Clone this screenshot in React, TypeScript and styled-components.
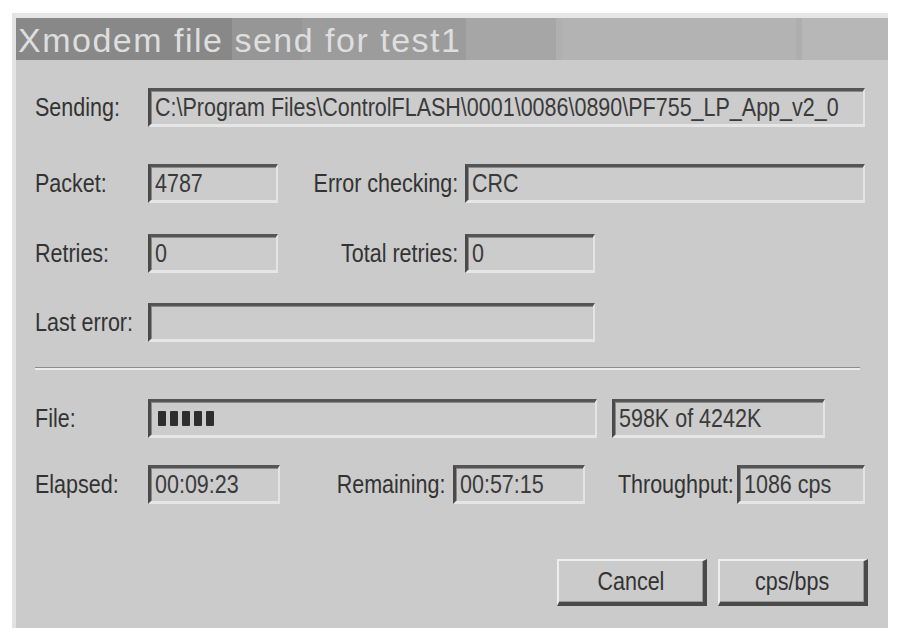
import { type FC } from 'react'
import styled, { createGlobalStyle } from 'styled-components'

const GlobalStyle = createGlobalStyle`
  html, body {
    margin: 0;
    padding: 0;
    background: #ffffff;
  }
  body {
    font-family: "Liberation Sans", Arial, sans-serif;
  }
`

const Page = styled.div`
  width: 901px;
  height: 640px;
  padding: 13px 0 0 12px;
  box-sizing: border-box;
`

const Window = styled.div`
  width: 876px;
  height: 615px;
  box-sizing: border-box;
  border-top: 5px solid #e6e6e6;
  border-left: 4px solid #e2e2e2;
  background: #cbcbcb;
  display: flex;
  flex-direction: column;
`

const TitleBar = styled.div`
  height: 42px;
  flex: none;
  display: flex;
  align-items: center;
  padding-left: 2px;
  background: linear-gradient(
    to right,
    #888888 0 216px,
    #969696 216px 286px,
    #9c9c9c 286px 450px,
    #a6a6a6 450px 540px,
    #b0b0b0 540px 546px,
    #b3b3b3 546px 780px,
    #aeaeae 780px 786px,
    #b7b7b7 786px
  );
`

const Title = styled.span`
  font-family: "Liberation Sans", Arial, sans-serif;
  font-size: 34px;
  letter-spacing: 1.5px;
  color: #dedede;
  line-height: 1;
  margin-top: 2px;
`

const Client = styled.div`
  flex: 1;
  display: flex;
  flex-direction: column;
  padding: 28px 0 0 19px;
`

const Row = styled.div<{ $mt?: number }>`
  display: flex;
  align-items: center;
  height: 39px;
  margin-top: ${(p) => p.$mt ?? 0}px;
`

// the dialog font is a narrow sans; squeeze the regular one to its width
const Narrow = styled.span<{ $origin?: string }>`
  display: inline-block;
  white-space: nowrap;
  transform: scaleX(0.86);
  transform-origin: ${(p) => p.$origin ?? 'left'} center;
`

const Label = styled.span<{ $w: number; $right?: boolean; $gap?: number }>`
  width: ${(p) => p.$w}px;
  flex: none;
  text-align: ${(p) => (p.$right ? 'right' : 'left')};
  padding-right: ${(p) => p.$gap ?? 0}px;
  box-sizing: border-box;
  font-size: 25px;
  color: #333333;
  white-space: nowrap;
`

const Field = styled.div<{ $w: number; $ml?: number }>`
  width: ${(p) => p.$w}px;
  margin-left: ${(p) => p.$ml ?? 0}px;
  height: 39px;
  flex: none;
  box-sizing: border-box;
  border-style: solid;
  border-width: 3px 2px 3px 3px;
  border-color: #555555 #e4e4e4 #e6e6e6 #4a4a4a;
  box-shadow: inset 1px 1px 0 #8a8a8a;
  background: #cccccc;
  display: flex;
  align-items: center;
  padding-left: 4px;
  overflow: hidden;
  font-size: 25px;
  color: #3a3a3a;
  white-space: nowrap;
`

const Blocks = styled.div`
  display: flex;
  gap: 4px;
  padding-left: 3px;
`

const Block = styled.span`
  width: 8px;
  height: 15px;
  border-radius: 1px;
  background: #2e2e2e;
`

const Separator = styled.div`
  width: 825px;
  height: 1px;
  margin-top: 25px;
  background: #8c8c8c;
  border-bottom: 2px solid #ececec;
`

const ButtonRow = styled.div`
  display: flex;
  gap: 11px;
  margin-top: 55px;
  padding-left: 522px;
`

const Button = styled.button`
  width: 150px;
  height: 47px;
  box-sizing: border-box;
  background: #cbcbcb;
  border-style: solid;
  border-width: 2px 4px 4px 2px;
  border-color: #eeeeee #4a4a4a #4a4a4a #eeeeee;
  box-shadow: inset -1px -1px 0 #9a9a9a;
  font-family: "Liberation Sans", Arial, sans-serif;
  font-size: 25px;
  color: #333333;
  padding: 0;
`

const App: FC = () => (
  <Page>
    <GlobalStyle />
    <Window>
      <TitleBar>
        <Title>Xmodem file send for test1</Title>
      </TitleBar>
      <Client>
        <Row>
          <Label $w={113}><Narrow>Sending:</Narrow></Label>
          <Field $w={717}>
            <Narrow>C:\Program Files\ControlFLASH\0001\0086\0890\PF755_LP_App_v2_0</Narrow>
          </Field>
        </Row>
        <Row $mt={37}>
          <Label $w={113}><Narrow>Packet:</Narrow></Label>
          <Field $w={130}><Narrow>4787</Narrow></Field>
          <Label $w={187} $right $gap={7}><Narrow $origin="right">Error checking:</Narrow></Label>
          <Field $w={400}><Narrow>CRC</Narrow></Field>
        </Row>
        <Row $mt={31}>
          <Label $w={113}><Narrow>Retries:</Narrow></Label>
          <Field $w={130}><Narrow>0</Narrow></Field>
          <Label $w={187} $right $gap={7}><Narrow $origin="right">Total retries:</Narrow></Label>
          <Field $w={130}><Narrow>0</Narrow></Field>
        </Row>
        <Row $mt={30}>
          <Label $w={113}><Narrow>Last error:</Narrow></Label>
          <Field $w={447}></Field>
        </Row>
        <Separator />
        <Row $mt={29}>
          <Label $w={113}><Narrow>File:</Narrow></Label>
          <Field $w={449}>
            <Blocks>
              {[0, 1, 2, 3, 4].map((i) => (
                <Block key={i} />
              ))}
            </Blocks>
          </Field>
          <Field $w={213} $ml={15}><Narrow>598K of 4242K</Narrow></Field>
        </Row>
        <Row $mt={27}>
          <Label $w={113}><Narrow>Elapsed:</Narrow></Label>
          <Field $w={132}><Narrow>00:09:23</Narrow></Field>
          <Label $w={173} $right $gap={8}><Narrow $origin="right">Remaining:</Narrow></Label>
          <Field $w={132}><Narrow>00:57:15</Narrow></Field>
          <Label $w={152} $right $gap={3}><Narrow $origin="right">Throughput:</Narrow></Label>
          <Field $w={128}><Narrow>1086 cps</Narrow></Field>
        </Row>
        <ButtonRow>
          <Button><Narrow $origin="center">Cancel</Narrow></Button>
          <Button><Narrow $origin="center">cps/bps</Narrow></Button>
        </ButtonRow>
      </Client>
    </Window>
  </Page>
)

export default App
